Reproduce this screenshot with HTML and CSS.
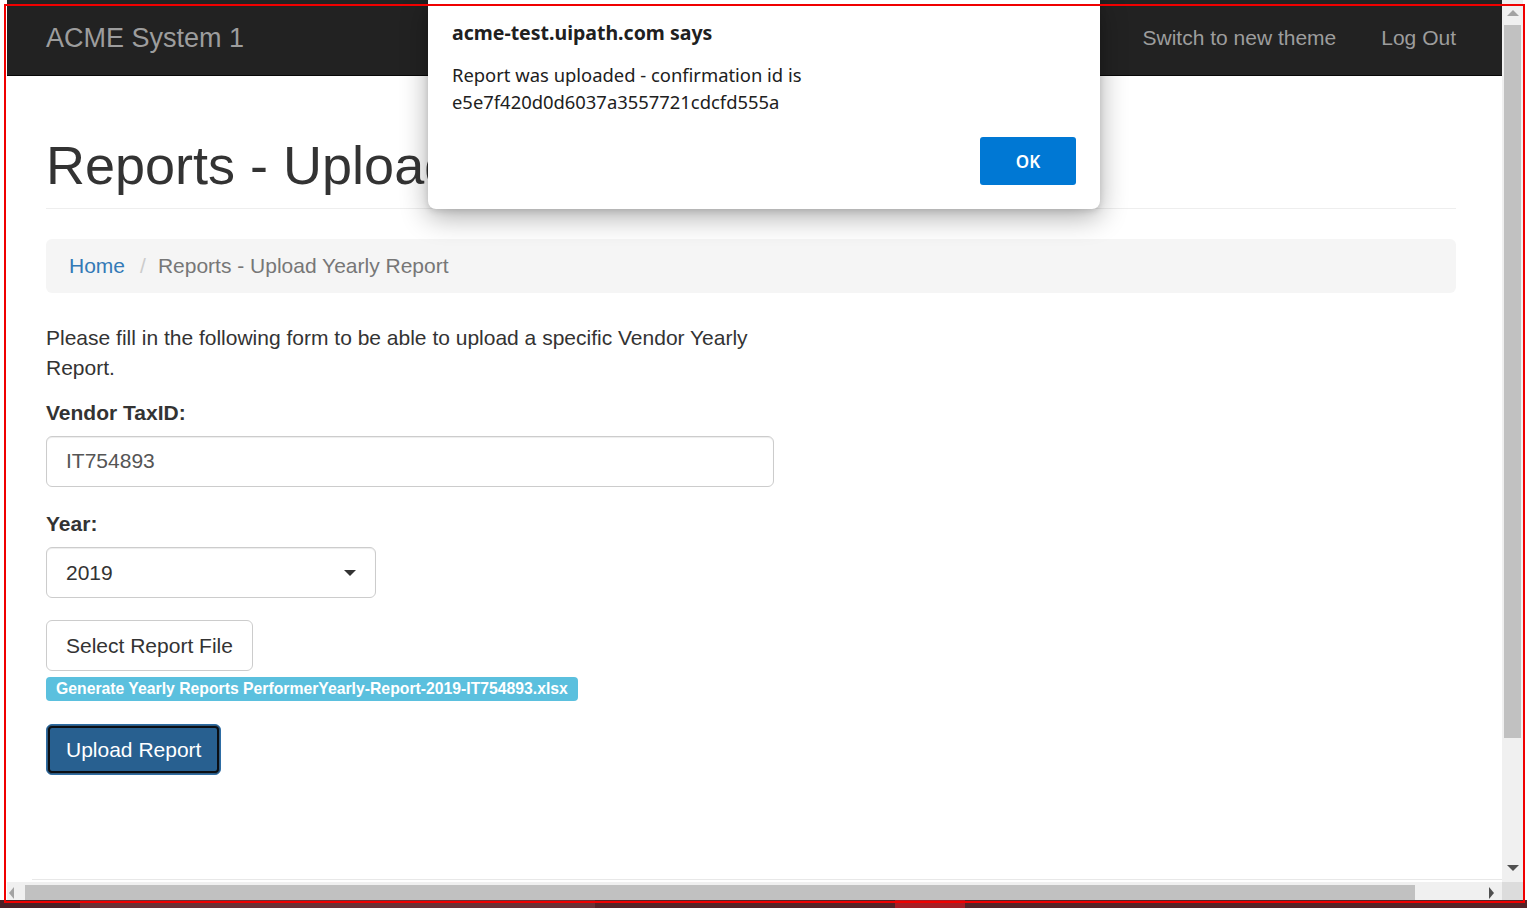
FILE: index.html
```html
<!DOCTYPE html>
<html lang="en">
<head>
<meta charset="utf-8">
<title>ACME System 1 - Reports - Upload Yearly Report</title>
<link rel="stylesheet" href="styles.css">
</head>
<body>
<div class="screen">
  <div class="frame">
    <div class="page">
      <nav class="navbar">
        <a class="brand">ACME System 1</a>
        <div class="nav-right">
          <a class="nav-link">Switch to new theme</a>
          <a class="nav-link">Log Out</a>
        </div>
      </nav>
      <main class="container">
        <div class="page-header">
          <h1>Reports - Upload Yearly Report</h1>
        </div>
        <ol class="breadcrumb">
          <li><a class="crumb-link">Home</a></li>
          <li class="crumb-sep">/</li>
          <li class="crumb-active">Reports - Upload Yearly Report</li>
        </ol>
        <div class="form-col">
          <p class="intro">Please fill in the following form to be able to upload a specific Vendor Yearly Report.</p>
          <div class="form-group">
            <label class="form-label">Vendor TaxID:</label>
            <div class="form-control">IT754893</div>
          </div>
          <div class="form-group">
            <label class="form-label">Year:</label>
            <div class="form-control select">
              <span class="select-value">2019</span>
              <span class="caret"></span>
            </div>
          </div>
          <div class="file-row">
            <span class="btn btn-default">Select Report File</span>
          </div>
          <div class="badge-row">
            <span class="badge">Generate Yearly Reports PerformerYearly-Report-2019-IT754893.xlsx</span>
          </div>
          <div class="submit-row">
            <span class="btn btn-primary">Upload Report</span>
          </div>
        </div>
      </main>
      <footer class="footer"></footer>
    </div>
    <div class="vscroll">
      <div class="vbtn vbtn-up"><span class="arrow-up"></span></div>
      <div class="vthumb"></div>
      <div class="vtrack"></div>
      <div class="vbtn vbtn-down"><span class="arrow-down"></span></div>
    </div>
  </div>
  <div class="hrow">
    <div class="hscroll">
      <div class="hbtn hbtn-left"><span class="arrow-left"></span></div>
      <div class="hthumb"></div>
      <div class="htrack"></div>
      <div class="hbtn hbtn-right"><span class="arrow-right"></span></div>
    </div>
    <div class="corner"></div>
  </div>
  <div class="taskbar">
    <span class="tb tb-a"></span>
    <span class="tb tb-b"></span>
    <span class="tb tb-c"></span>
    <span class="tb tb-d"></span>
    <span class="tb tb-e"></span>
  </div>
</div>

<div class="dialog">
  <div class="dialog-title">acme-test.uipath.com says</div>
  <div class="dialog-msg">Report was uploaded - confirmation id is<br>e5e7f420d0d6037a3557721cdcfd555a</div>
  <div class="dialog-actions"><span class="ok-btn">OK</span></div>
</div>

<div class="outline"></div>
</body>
</html>
```
FILE: styles.css
```css
* { box-sizing: border-box; }
html, body {
  margin: 0;
  padding: 0;
  width: 1527px;
  height: 908px;
  overflow: hidden;
  background: #ffffff;
  font-family: "Liberation Sans", Arial, sans-serif;
  color: #333333;
}

.screen {
  display: flex;
  flex-direction: column;
  width: 1527px;
  height: 908px;
}

.frame {
  display: flex;
  height: 882px;
  padding-left: 7px;
}

.page {
  width: 1495px;
  height: 882px;
  display: flex;
  flex-direction: column;
  overflow: hidden;
  background: #ffffff;
}

/* ---------- navbar ---------- */
.navbar {
  height: 76px;
  flex: none;
  background: #222222;
  border-bottom: 1px solid #080808;
  display: flex;
  align-items: center;
  justify-content: space-between;
  padding: 0 46px 0 39px;
}
.brand {
  font-size: 27px;
  color: #9d9d9d;
  line-height: 30px;
  margin-top: 1px;
}
.nav-right {
  display: flex;
  gap: 45px;
  margin-top: 1px;
}
.nav-link {
  font-size: 21px;
  color: #9d9d9d;
  line-height: 30px;
}

/* ---------- main ---------- */
.container {
  flex: 1;
  padding: 0 46px 0 39px;
}
.page-header {
  margin-top: 60px;
  padding-bottom: 13px;
  border-bottom: 1px solid #eeeeee;
}
h1 {
  margin: 0;
  font-size: 54px;
  font-weight: 500;
  line-height: 59px;
  color: #333333;
  white-space: nowrap;
}

.breadcrumb {
  list-style: none;
  margin: 30px 0 30px;
  padding: 12px 22px;
  height: 54px;
  background: #f5f5f5;
  border-radius: 6px;
  display: flex;
  font-size: 21px;
  line-height: 30px;
}
.crumb-link { color: #337ab7; margin-left: 1px; }
.crumb-sep { color: #cccccc; padding: 0 12px 0 15px; }
.crumb-active { color: #777777; }

.form-col {
  width: 728px;
  font-size: 21px;
  line-height: 30px;
}
.intro {
  margin: 0 0 15px;
}
.form-group {
  margin-bottom: 22px;
}
.form-label {
  display: block;
  font-weight: bold;
  margin-bottom: 8px;
}
.form-control {
  height: 51px;
  border: 1px solid #cccccc;
  border-radius: 6px;
  padding: 9px 19px;
  color: #555555;
  box-shadow: inset 0 1px 1px rgba(0,0,0,0.075);
}
.select {
  width: 330px;
  display: flex;
  align-items: center;
  justify-content: space-between;
  color: #333333;
  padding-right: 19px;
}
.caret {
  width: 0;
  height: 0;
  border-left: 6px solid transparent;
  border-right: 6px solid transparent;
  border-top: 6px solid #333333;
  margin-top: 0;
}

.btn {
  display: inline-block;
  height: 51px;
  padding: 9px 19px;
  font-size: 21px;
  line-height: 31px;
  border: 1px solid #cccccc;
  border-radius: 6px;
  white-space: nowrap;
}
.btn-default {
  background: #ffffff;
  color: #333333;
}
.file-row { display: flex; height: 51px; }

.badge-row {
  display: flex;
  margin-top: 6px;
  height: 24px;
}
.badge {
  display: block;
  height: 24px;
  padding: 0 10px 0 10px;
  background: #5bc0de;
  color: #ffffff;
  font-weight: bold;
  font-size: 15.75px;
  line-height: 23px;
  border-radius: 4px;
  white-space: nowrap;
}

.submit-row {
  display: flex;
  margin-top: 23px;
}
.btn-primary {
  background: #286090;
  color: #ffffff;
  border: 1px solid #2e6da4;
  box-shadow: inset 0 0 0 1px #2e5b82, inset 0 0 0 3px #0b0f14;
  padding: 9px 19px;
}

.footer {
  height: 3px;
  flex: none;
  border-top: 1px solid #e8e8e8;
  margin-left: 25px;
}

/* ---------- scrollbars ---------- */
.vscroll {
  width: 21px;
  height: 882px;
  background: #f0f0f0;
  display: flex;
  flex-direction: column;
}
.vbtn {
  height: 25px;
  flex: none;
  display: flex;
  align-items: center;
  justify-content: center;
}
.vbtn-up { padding-top: 0; }
.vbtn-down { height: 24px; padding-bottom: 4px; }
.vthumb {
  height: 713px;
  flex: none;
  margin: 0 2px;
  background: #c1c1c1;
}
.vtrack { flex: 1; }
.arrow-up {
  width: 0; height: 0;
  border-left: 6px solid transparent;
  border-right: 6px solid transparent;
  border-bottom: 6px solid #a3a3a3;
}
.arrow-down {
  width: 0; height: 0;
  border-left: 6px solid transparent;
  border-right: 6px solid transparent;
  border-top: 6px solid #505050;
}

.hrow {
  display: flex;
  height: 18px;
  padding-left: 7px;
}
.hscroll {
  width: 1495px;
  height: 18px;
  background: #f0f0f0;
  display: flex;
  align-items: stretch;
}
.hbtn {
  width: 18px;
  flex: none;
  display: flex;
  align-items: center;
  justify-content: center;
  padding-top: 3px;
}
.hbtn-left { justify-content: flex-start; padding-left: 2px; }
.hbtn-right { width: 87px; justify-content: flex-end; padding-right: 8px; }
.hthumb {
  width: 1390px;
  flex: none;
  margin-top: 3px;
  background: #c1c1c1;
}
.htrack { flex: 1; }
.arrow-left {
  width: 0; height: 0;
  border-top: 6px solid transparent;
  border-bottom: 6px solid transparent;
  border-right: 5px solid #a3a3a3;
}
.arrow-right {
  width: 0; height: 0;
  border-top: 6px solid transparent;
  border-bottom: 6px solid transparent;
  border-left: 5px solid #505050;
}
.corner {
  width: 21px;
  height: 18px;
  background: #dcdcdc;
}

.taskbar {
  height: 8px;
  display: flex;
  background: #552428;
}
.tb { display: block; height: 8px; }
.tb-a { width: 80px; background: #4a2026; }
.tb-b { width: 515px; background: #6a3136; }
.tb-c { width: 300px; background: #542327; }
.tb-d { width: 70px; background: #a61d25; }
.tb-e { flex: 1; background: #552428; }

/* ---------- alert dialog ---------- */
.dialog {
  position: absolute;
  left: 428px;
  top: 0;
  width: 672px;
  height: 209px;
  background: #ffffff;
  border-radius: 0 0 8px 8px;
  box-shadow: 0 8px 28px rgba(0,0,0,0.32), 0 2px 6px rgba(0,0,0,0.12);
  padding: 19px 24px 24px 24px;
  font-family: "Noto Sans", "Open Sans", sans-serif;
  color: #202020;
  display: flex;
  flex-direction: column;
}
.dialog-title {
  font-size: 19.5px;
  font-weight: bold;
  line-height: 28px;
}
.dialog-msg {
  margin-top: 14px;
  font-size: 18.4px;
  line-height: 27px;
}
.dialog-actions {
  margin-top: auto;
  display: flex;
  justify-content: flex-end;
}
.ok-btn {
  width: 96px;
  height: 48px;
  background: #0078d4;
  color: #ffffff;
  border-radius: 3px;
  display: flex;
  align-items: center;
  justify-content: center;
  font-size: 17px;
  font-weight: 600;
}

.outline {
  position: absolute;
  left: 4px;
  top: 4px;
  width: 1521px;
  height: 899px;
  border: 2px solid #f00000;
  pointer-events: none;
}
```
